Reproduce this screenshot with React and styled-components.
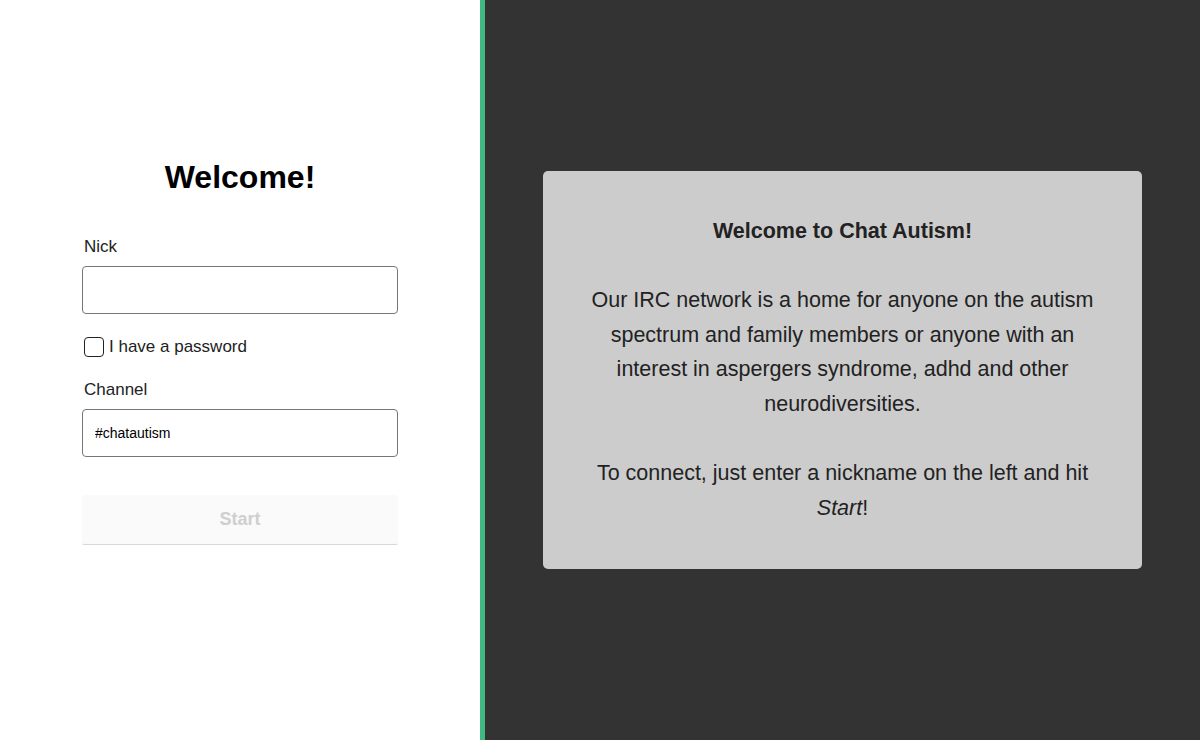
import styled, { createGlobalStyle } from 'styled-components';

const GlobalStyle = createGlobalStyle`
  html, body {
    margin: 0;
    padding: 0;
    font-family: "Liberation Sans", Arial, sans-serif;
  }
  * { box-sizing: border-box; }
`;

const Page = styled.div`
  display: flex;
  width: 1200px;
  height: 740px;
  overflow: hidden;
`;

const Left = styled.div`
  width: 485px;
  flex-shrink: 0;
  background: #fff;
  border-right: 5px solid #41b883;
  padding-top: 159px;
  display: flex;
  flex-direction: column;
  align-items: center;
`;

const Title = styled.h1`
  margin: 0;
  font-size: 32px;
  line-height: 37px;
  font-weight: 700;
  color: #000;
`;

const Form = styled.form`
  width: 316px;
  margin-top: 42px;
  display: flex;
  flex-direction: column;
`;

const Label = styled.label`
  font-size: 17px;
  line-height: 18px;
  color: #222;
  padding-left: 2px;
  margin-top: ${props => props.$top || 0}px;
`;

const Input = styled.input`
  margin-top: 10px;
  height: 48px;
  width: 100%;
  border: 1px solid #767676;
  border-radius: 4px;
  padding: 0 12px;
  font-family: "Liberation Sans", Arial, sans-serif;
  font-size: 14px;
  color: #000;
  outline: none;
`;

const CheckRow = styled.label`
  display: flex;
  align-items: center;
  gap: 5px;
  margin-top: 23px;
  padding-left: 2px;
  height: 20px;
  font-size: 17px;
  color: #222;
`;

const Check = styled.input`
  appearance: none;
  margin: 0;
  width: 20px;
  height: 20px;
  border: 1.5px solid #222;
  border-radius: 4px;
  background: #fff;
`;

const StartButton = styled.button`
  margin-top: 38px;
  height: 50px;
  width: 100%;
  border: none;
  border-bottom: 1px solid #d8d8d8;
  border-radius: 2px;
  background: #fafafa;
  color: #cfcfcf;
  font-family: "Liberation Sans", Arial, sans-serif;
  font-size: 18px;
  font-weight: 700;
`;

const Right = styled.div`
  flex: 1;
  background: #333;
  display: flex;
  align-items: center;
  justify-content: center;
`;

const Card = styled.div`
  width: 599px;
  height: 398px;
  background: #ccc;
  border-radius: 5px;
  padding: 43px 44px 0;
  color: #222;
  font-size: 21.5px;
  line-height: 34.6px;
  text-align: center;
`;

const CardText = styled.p`
  margin: 0;
`;

export default function App() {
  return (
    <>
      <GlobalStyle />
      <Page>
        <Left>
          <Title>Welcome!</Title>
          <Form onSubmit={e => e.preventDefault()}>
            <Label>Nick</Label>
            <Input type="text" />
            <CheckRow>
              <Check type="checkbox" />
              I have a password
            </CheckRow>
            <Label $top={24}>Channel</Label>
            <Input type="text" defaultValue="#chatautism" />
            <StartButton type="submit" disabled>Start</StartButton>
          </Form>
        </Left>
        <Right>
          <Card>
            <CardText>
              <b>Welcome to Chat Autism!</b>
              <br />
              <br />
              Our IRC network is a home for anyone on the autism spectrum and family members or anyone with an interest in aspergers syndrome, adhd and other neurodiversities.
              <br />
              <br />
              To connect, just enter a nickname on the left and hit <i>Start</i>!
            </CardText>
          </Card>
        </Right>
      </Page>
    </>
  );
}
